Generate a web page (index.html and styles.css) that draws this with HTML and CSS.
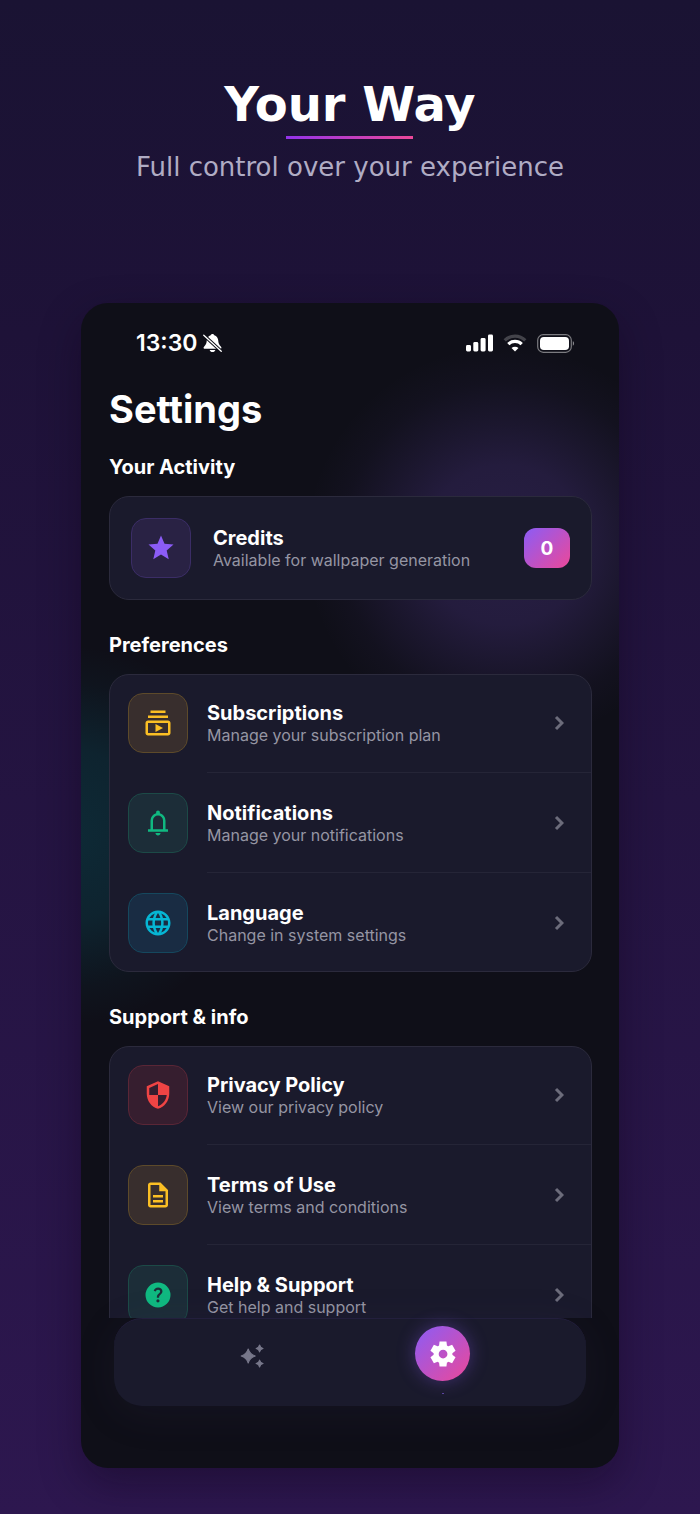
FILE: index.html
```html
<!DOCTYPE html>
<html lang="en">
<head>
<meta charset="utf-8">
<meta name="viewport" content="width=device-width, initial-scale=1">
<title>Your Way</title>
<link rel="stylesheet" href="styles.css">
</head>
<body>
<header class="hero">
  <h1 class="hero-title">Your Way</h1>
  <p class="hero-sub">Full control over your experience</p>
</header>

<div class="phone">
  <div class="status">
    <span class="status-left">
      <span class="time">13:30</span>
      <svg class="mute" viewBox="0 0 20 20" aria-hidden="true">
        <path fill="currentColor" d="M10 .4c-1 0-1.700.6-1.900 1.400C5.500 2.600 4.200 4.600 4 7.200c-.2 3.300-.9 4.700-2.500 6.200-.6.700-.9 1-.9 1.600 0 .7.500 1.100 1.300 1.100h16.200c.8 0 1.300-.4 1.300-1.100 0-.6-.3-.9-.9-1.600-1.600-1.500-2.300-2.900-2.500-6.200-.2-2.600-1.500-4.600-4.100-5.400C11.700 1 11 .4 10 .4zM7 17.400c.3 1.300 1.500 2.200 3 2.200s2.700-.9 3-2.200z"/>
        <path stroke="#0f0f18" stroke-width="3.600" d="M.5 1.500l19 17.500"/>
        <path stroke="currentColor" stroke-width="1.400" stroke-linecap="round" d="M.8 1.800l18.400 17"/>
      </svg>
    </span>
    <span class="status-right">
      <svg class="signal" viewBox="0 0 27 18" fill="currentColor" aria-hidden="true">
        <rect x="0" y="11" width="5" height="6.500" rx="1.400"/><rect x="7.300" y="8" width="5" height="9.500" rx="1.400"/><rect x="14.600" y="4" width="5" height="13.500" rx="1.400"/><rect x="22" y="0.500" width="5" height="17" rx="1.400"/>
      </svg>
      <svg class="wifi" viewBox="0 0 24 18" fill="none" stroke="currentColor" aria-hidden="true">
        <path stroke-width="3.200" opacity=".22" d="M1.700 6.400a14.500 14.500 0 0 1 20.600 0"/>
        <path stroke-width="3.200" d="M5.300 10.100a9.500 9.500 0 0 1 13.400 0"/>
        <path fill="currentColor" stroke="none" d="M12 17.600l-3.500-3.500a5 5 0 0 1 7 0z"/>
      </svg>
      <svg class="battery" viewBox="0 0 38 19" aria-hidden="true">
        <rect x=".7" y=".7" width="33.600" height="17.600" rx="5.500" fill="none" stroke="currentColor" stroke-width="1.200" opacity=".45"/>
        <rect x="3" y="3" width="29" height="13" rx="3.800" fill="currentColor"/>
        <path d="M35.800 7.300c1.700.4 1.700 4 0 4.400z" fill="currentColor" opacity=".5"/>
      </svg>
    </span>
  </div>

  <main class="scroll">
    <h2 class="page-title">Settings</h2>

    <section class="group">
      <h3 class="group-title">Your Activity</h3>
      <div class="card credits">
        <span class="tile violet"><svg class="icon" viewBox="0 0 24 24" aria-hidden="true"><path d="M12 17.270L18.180 21l-1.640-7.030L22 9.240l-7.190-.61L12 2 9.190 8.630 2 9.240l5.460 4.730L5.820 21z"/></svg></span>
        <span class="text"><strong class="label">Credits</strong><span class="desc">Available for wallpaper generation</span></span>
        <span class="count">0</span>
      </div>
    </section>

    <section class="group">
      <h3 class="group-title">Preferences</h3>
      <ul class="card list">
        <li class="item"><a class="row" href="#subscriptions">
          <span class="tile amber"><svg class="icon" viewBox="0 0 24 24" aria-hidden="true"><path d="M4 6h16v2H4zm2-4h12v2H6zm14 8H4c-1.100 0-2 .9-2 2v8c0 1.100.9 2 2 2h16c1.100 0 2-.9 2-2v-8c0-1.100-.9-2-2-2zm0 10H4v-8h16v8zm-10-7.270v6.530L16 16z"/></svg></span>
          <span class="text"><strong class="label">Subscriptions</strong><span class="desc">Manage your subscription plan</span></span>
          <svg class="chevron" viewBox="0 0 10 16" aria-hidden="true"><path d="M2 2l6 6-6 6"/></svg>
        </a></li>
        <li class="item"><a class="row" href="#notifications">
          <span class="tile green"><svg class="icon" viewBox="0 0 24 24" aria-hidden="true"><path d="M4 19v-2h2v-7q0-2.075 1.250-3.687T10.500 4.200v-.7q0-.625.438-1.062T12 2t1.063.438T13.500 3.500v.7q2 .5 3.250 2.113T18 10v7h2v2zm8 3q-.825 0-1.412-.587T10 20h4q0 .825-.587 1.413T12 22m-4-5h8v-7q0-1.650-1.175-2.825T12 6T9.175 7.175T8 10z"/></svg></span>
          <span class="text"><strong class="label">Notifications</strong><span class="desc">Manage your notifications</span></span>
          <svg class="chevron" viewBox="0 0 10 16" aria-hidden="true"><path d="M2 2l6 6-6 6"/></svg>
        </a></li>
        <li class="item"><a class="row" href="#language">
          <span class="tile cyan"><svg class="icon" viewBox="0 0 24 24" aria-hidden="true"><path d="M11.990 2C6.470 2 2 6.480 2 12s4.470 10 9.990 10C17.520 22 22 17.520 22 12S17.520 2 11.990 2zm6.930 6h-2.950a15.650 15.650 0 0 0-1.380-3.560A8.030 8.030 0 0 1 18.920 8zM12 4.040c.83 1.200 1.480 2.530 1.910 3.960h-3.820c.43-1.430 1.080-2.760 1.910-3.960zM4.260 14C4.100 13.360 4 12.690 4 12s.1-1.360.26-2h3.380c-.08.66-.14 1.320-.14 2s.06 1.340.14 2H4.260zm.82 2h2.950c.32 1.250.78 2.450 1.380 3.560A7.987 7.987 0 0 1 5.080 16zm2.950-8H5.080a7.987 7.987 0 0 1 4.330-3.560A15.650 15.650 0 0 0 8.030 8zM12 19.960c-.83-1.200-1.480-2.530-1.910-3.960h3.820c-.43 1.430-1.080 2.760-1.910 3.960zM14.340 14H9.660c-.09-.66-.16-1.320-.16-2s.07-1.350.16-2h4.680c.09.65.16 1.320.16 2s-.07 1.340-.16 2zm.25 5.560c.6-1.110 1.060-2.310 1.380-3.560h2.950a8.030 8.030 0 0 1-4.330 3.560zM16.360 14c.08-.66.14-1.320.14-2s-.06-1.340-.14-2h3.380c.16.64.26 1.310.26 2s-.1 1.360-.26 2h-3.380z"/></svg></span>
          <span class="text"><strong class="label">Language</strong><span class="desc">Change in system settings</span></span>
          <svg class="chevron" viewBox="0 0 10 16" aria-hidden="true"><path d="M2 2l6 6-6 6"/></svg>
        </a></li>
      </ul>
    </section>

    <section class="group">
      <h3 class="group-title">Support &amp; info</h3>
      <ul class="card list">
        <li class="item"><a class="row" href="#privacy">
          <span class="tile red"><svg class="icon" viewBox="0 0 24 24" aria-hidden="true"><path d="M12 1L3 5v6c0 5.550 3.840 10.740 9 12 5.160-1.260 9-6.450 9-12V5l-9-4zm0 10.990h7c-.53 4.120-3.280 7.790-7 8.940V12H5V6.300l7-3.110v8.800z"/></svg></span>
          <span class="text"><strong class="label">Privacy Policy</strong><span class="desc">View our privacy policy</span></span>
          <svg class="chevron" viewBox="0 0 10 16" aria-hidden="true"><path d="M2 2l6 6-6 6"/></svg>
        </a></li>
        <li class="item"><a class="row" href="#terms">
          <span class="tile amber"><svg class="icon" viewBox="0 0 24 24" aria-hidden="true"><path d="M8 16h8v2H8zm0-4h8v2H8zm6-10H6c-1.100 0-2 .9-2 2v16c0 1.100.89 2 1.990 2H18c1.100 0 2-.9 2-2V8l-6-6zm4 18H6V4h7v5h5v11z"/></svg></span>
          <span class="text"><strong class="label">Terms of Use</strong><span class="desc">View terms and conditions</span></span>
          <svg class="chevron" viewBox="0 0 10 16" aria-hidden="true"><path d="M2 2l6 6-6 6"/></svg>
        </a></li>
        <li class="item"><a class="row" href="#help">
          <span class="tile green"><svg class="icon" viewBox="0 0 24 24" aria-hidden="true"><path fill-rule="evenodd" d="M12 2a10 10 0 1 0 0 20a10 10 0 1 0 0-20zM11.950 18q.525 0 .888-.363t.362-.887t-.362-.888t-.888-.362t-.887.363t-.363.887t.363.888t.887.362m-.9-3.850h1.850q0-.825.188-1.300t1.062-1.300q.65-.65 1.025-1.238T15.550 8.900q0-1.400-1.025-2.150T12.100 6q-1.425 0-2.312.75T8.550 8.550l1.650.65q.125-.45.563-.975T12.100 7.700q.8 0 1.200.438t.4.962q0 .5-.3.938t-.75.812q-1.100.975-1.350 1.475t-.25 1.825"/></svg></span>
          <span class="text"><strong class="label">Help &amp; Support</strong><span class="desc">Get help and support</span></span>
          <svg class="chevron" viewBox="0 0 10 16" aria-hidden="true"><path d="M2 2l6 6-6 6"/></svg>
        </a></li>
      </ul>
    </section>
  </main>

  <nav class="tabs" aria-label="Main">
    <a class="tab" href="#create" aria-label="Create">
      <svg class="sparkle" viewBox="0 0 24 24" aria-hidden="true"><path d="M19 8.200Q18.500 5.500 15.800 5Q18.500 4.500 19 1.800Q19.500 4.500 22.200 5Q19.500 5.500 19 8.200zM8.500 18.500Q7 13.500 2 12Q7 10.500 8.500 5.500Q10 10.500 15 12Q10 13.500 8.500 18.500zM19 22.200Q18.500 19.500 15.800 19Q18.500 18.500 19 15.800Q19.500 18.500 22.200 19Q19.500 19.500 19 22.200z"/></svg>
    </a>
    <a class="tab active" href="#settings" aria-label="Settings" aria-current="page">
      <span class="orb"><svg class="icon" viewBox="0 0 24 24" aria-hidden="true"><path d="m9.250 22l-.4-3.200q-.325-.125-.612-.3t-.563-.375L4.700 19.375l-2.750-4.750l2.575-1.950Q4.500 12.500 4.500 12.338v-.675q0-.163.025-.338L1.950 9.375l2.750-4.750l2.975 1.250q.275-.2.575-.375t.6-.3l.4-3.200h5.500l.4 3.200q.325.125.613.3t.562.375l2.975-1.250l2.750 4.750l-2.575 1.950q.025.175.025.338v.674q0 .163-.05.338l2.575 1.950l-2.750 4.750l-2.950-1.250q-.275.2-.575.375t-.6.3l-.4 3.200zm2.800-6.500q1.450 0 2.475-1.025T15.550 12t-1.025-2.475T12.050 8.500q-1.475 0-2.488 1.025T8.550 12t1.013 2.475T12.050 15.500"/></svg></span>
      <span class="dot"></span>
    </a>
  </nav>
</div>
</body>
</html>
```
FILE: styles.css
```css
* {
  box-sizing: border-box;
  margin: 0;
  padding: 0;
}

body {
  display: flex;
  flex-direction: column;
  height: 100vh;
  padding: 72px 81px 46px;
  overflow: hidden;
  background: linear-gradient(180deg, #1a1333 0%, #1e1238 22%, #2d174f 100%);
  color: #fff;
  font-family: Inter, "Liberation Sans", sans-serif;
}

a {
  color: inherit;
  text-decoration: none;
}

/* Headline */

.hero {
  display: flex;
  flex-direction: column;
  align-items: center;
  height: 231px;
  flex: none;
  font-family: "DejaVu Sans", sans-serif;
  text-align: center;
}

.hero-title {
  display: flex;
  flex-direction: column;
  align-items: center;
  font-size: 48px;
  line-height: 64px;
}

.hero-title::after {
  content: "";
  width: 127px;
  height: 3px;
  background: linear-gradient(90deg, #9333ea, #ec4899);
}

.hero-sub {
  margin-top: 10px;
  color: #b0acc4;
  font-size: 26px;
  line-height: 36px;
}

/* Device */

.phone {
  display: flex;
  flex: 1;
  flex-direction: column;
  min-height: 0;
  padding-bottom: 62px;
  overflow: hidden;
  border-radius: 27px;
  background:
    radial-gradient(circle 200px at 424px 242px, rgba(139, 92, 246, 0.2) 0%, rgba(139, 92, 246, 0.17) 40%, rgba(139, 92, 246, 0.1) 60%, rgba(139, 92, 246, 0.03) 82%, transparent 100%),
    radial-gradient(circle 190px at -14px 532px, rgba(6, 182, 212, 0.16) 0%, rgba(6, 182, 212, 0.12) 45%, rgba(6, 182, 212, 0.03) 80%, transparent 100%),
    #0f0f18;
  box-shadow: 0 16px 40px rgba(16, 4, 24, 0.4);
}

.status {
  display: flex;
  flex: none;
  align-items: center;
  justify-content: space-between;
  height: 80px;
  padding: 0 44px 0 55px;
}

.status-left {
  display: flex;
  align-items: center;
  gap: 5px;
}

.status-right {
  display: flex;
  align-items: center;
  gap: 10px;
}

.time {
  font-size: 23px;
  font-weight: 600;
  line-height: 28px;
}

.mute {
  width: 19px;
  height: 20px;
}

.signal {
  width: 27px;
  height: 18px;
}

.wifi {
  width: 24px;
  height: 18px;
}

.battery {
  width: 38px;
  height: 19px;
}

/* Settings content */

.scroll {
  flex: 1;
  min-height: 0;
  padding: 0 27px 0 28px;
  overflow: hidden auto;
  scrollbar-width: none;
}

.page-title {
  font-size: 38px;
  font-weight: 700;
  line-height: 52px;
}

.group {
  margin-bottom: 29px;
}

.page-title + .group {
  margin-top: 16px;
}

.group-title {
  margin-bottom: 13px;
  font-size: 20px;
  font-weight: 700;
  line-height: 32px;
}

.card {
  border: 1px solid #2b2a3c;
  border-radius: 20px;
  background: #1a1a2c;
}

.credits {
  display: flex;
  align-items: center;
  gap: 22px;
  padding: 21px;
}

.list {
  list-style: none;
}

.item + .item::before {
  content: "";
  display: block;
  height: 1px;
  margin-left: 97px;
  background: #252537;
}

.row {
  display: flex;
  align-items: center;
  gap: 19px;
  padding: 20px 27px 19px 18px;
}

.item:first-child .row {
  padding-top: 18px;
}

.item:last-child .row {
  padding-bottom: 18px;
}

.text {
  display: flex;
  flex: 1;
  flex-direction: column;
  min-width: 0;
}

.label {
  font-size: 20px;
  font-weight: 700;
  line-height: 24px;
}

.desc {
  color: #9595a3;
  font-size: 16px;
  line-height: 20px;
}

.tile {
  display: grid;
  flex: none;
  place-items: center;
  width: 60px;
  height: 60px;
  border: 1px solid;
  border-radius: 15px;
}

.icon {
  width: 30px;
  height: 30px;
  fill: currentColor;
}

.tile .icon {
  color: var(--tint);
}

.violet {
  --tint: #8b5cf6;
  border-color: #3b2d66;
  background: #292244;
}

.amber {
  --tint: #fbbf24;
  border-color: #5d4a2a;
  background: #382e2d;
}

.green {
  --tint: #10b981;
  border-color: #1c4a47;
  background: #1c2d38;
}

.cyan {
  --tint: #06b6d4;
  border-color: #15485e;
  background: #192c43;
}

.red {
  --tint: #ef4444;
  border-color: #5a2636;
  background: #361e2f;
}

.count {
  display: grid;
  place-items: center;
  min-width: 46px;
  height: 40px;
  border-radius: 12px;
  background: linear-gradient(135deg, #8b5cf6, #ec4899);
  font-size: 19px;
  font-weight: 700;
}

.chevron {
  width: 10px;
  height: 16px;
  fill: none;
  stroke: #6c6c7b;
  stroke-width: 3;
}

/* Tab bar */

.tabs {
  display: flex;
  flex: none;
  height: 88px;
  margin: 0 33px;
  padding: 0 48px 0 42px;
  border-top: 1px solid #231f3d;
  border-radius: 28px;
  background: #1a1a2c;
  box-shadow: 0 8px 40px rgba(60, 50, 90, 0.14);
}

.tab {
  display: flex;
  flex: 1;
  flex-direction: column;
  align-items: center;
  padding-top: 7px;
}

.sparkle {
  width: 26px;
  height: 26px;
  margin-top: 17px;
  fill: #77778a;
  stroke: #77778a;
  stroke-linejoin: round;
}

.orb {
  display: grid;
  place-items: center;
  width: 55px;
  height: 55px;
  border-radius: 50%;
  background: linear-gradient(135deg, #8b5cf6, #ec4899);
  box-shadow: 0 0 18px rgba(139, 92, 246, 0.35);
}

.dot {
  width: 2px;
  height: 1px;
  margin-top: 12px;
  background: #5b43a0;
}
```
